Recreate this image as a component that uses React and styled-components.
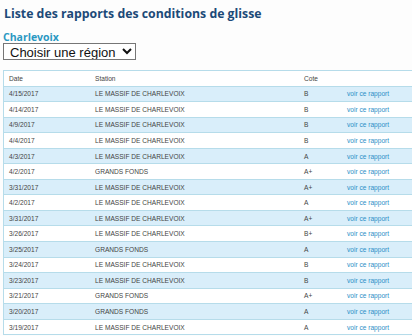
import styled, { createGlobalStyle } from "styled-components";

const GlobalStyle = createGlobalStyle`
  html, body {
    margin: 0;
    padding: 0;
    background: #fdfdfd;
    overflow: hidden;
  }
`;

const reports = [
  { date: "4/15/2017", station: "LE MASSIF DE CHARLEVOIX", cote: "B" },
  { date: "4/14/2017", station: "LE MASSIF DE CHARLEVOIX", cote: "B" },
  { date: "4/9/2017", station: "LE MASSIF DE CHARLEVOIX", cote: "B" },
  { date: "4/4/2017", station: "LE MASSIF DE CHARLEVOIX", cote: "B" },
  { date: "4/3/2017", station: "LE MASSIF DE CHARLEVOIX", cote: "A" },
  { date: "4/2/2017", station: "GRANDS FONDS", cote: "A+" },
  { date: "3/31/2017", station: "LE MASSIF DE CHARLEVOIX", cote: "A+" },
  { date: "4/2/2017", station: "LE MASSIF DE CHARLEVOIX", cote: "A" },
  { date: "3/31/2017", station: "LE MASSIF DE CHARLEVOIX", cote: "A+" },
  { date: "3/26/2017", station: "LE MASSIF DE CHARLEVOIX", cote: "B+" },
  { date: "3/25/2017", station: "GRANDS FONDS", cote: "A" },
  { date: "3/24/2017", station: "LE MASSIF DE CHARLEVOIX", cote: "B" },
  { date: "3/23/2017", station: "LE MASSIF DE CHARLEVOIX", cote: "B" },
  { date: "3/21/2017", station: "GRANDS FONDS", cote: "A+" },
  { date: "3/20/2017", station: "GRANDS FONDS", cote: "A" },
  { date: "3/19/2017", station: "LE MASSIF DE CHARLEVOIX", cote: "A" },
];

const Page = styled.div`
  padding: 6px 0 0 3px;
  font-family: "Liberation Sans", Arial, sans-serif;
`;

const Title = styled.h1`
  margin: 0 0 0 1px;
  font-family: "Open Sans", sans-serif;
  font-size: 12.3px;
  font-weight: 700;
  color: #1c4a78;
  line-height: 16px;
`;

const Region = styled.h2`
  margin: 9px 0 0 0;
  font-family: "Open Sans", sans-serif;
  font-size: 10.5px;
  font-weight: 700;
  color: #2a98c2;
  line-height: 12px;
`;

const Select = styled.select`
  display: block;
  width: 133px;
  height: 17px;
  margin: 0;
  padding: 0 0 0 2px;
  font-family: "Liberation Sans", Arial, sans-serif;
  font-size: 13px;
  color: #111;
  background: #fff;
  border: 1px solid #767676;
  border-radius: 0;
`;

const Table = styled.table`
  margin-top: 10px;
  width: 409px;
  border-collapse: collapse;
  border-left: 1px solid #b6dcea;
  font-size: 6.6px;
  color: #444;
`;

const Row = styled.tr`
  height: 15.56px;
  background: ${(p) => (p.$shaded ? "#d9eefa" : "#ffffff")};
  border-top: 1px solid #b6dcea;
  border-bottom: 1px solid #b6dcea;
`;

const Cell = styled.td`
  padding: 0 0 0 5px;
  text-align: left;
  font-weight: normal;
  width: ${(p) => p.$w || "auto"};
`;

const Link = styled.a`
  color: #2c8fc7;
  text-decoration: none;
`;

export default function App() {
  return (
    <>
      <GlobalStyle />
      <Page>
        <Title>Liste des rapports des conditions de glisse</Title>
        <Region>Charlevoix</Region>
        <Select defaultValue="">
          <option value="">Choisir une région</option>
        </Select>
        <Table>
          <tbody>
            <Row>
              <Cell as="th" $w="81px">Date</Cell>
              <Cell as="th" $w="204px">Station</Cell>
              <Cell as="th" $w="38px">Cote</Cell>
              <Cell as="th"></Cell>
            </Row>
            {reports.map((r, i) => (
              <Row key={i} $shaded={i % 2 === 0}>
                <Cell>{r.date}</Cell>
                <Cell>{r.station}</Cell>
                <Cell>{r.cote}</Cell>
                <Cell>
                  <Link href="#">voir ce rapport</Link>
                </Cell>
              </Row>
            ))}
          </tbody>
        </Table>
      </Page>
    </>
  );
}
